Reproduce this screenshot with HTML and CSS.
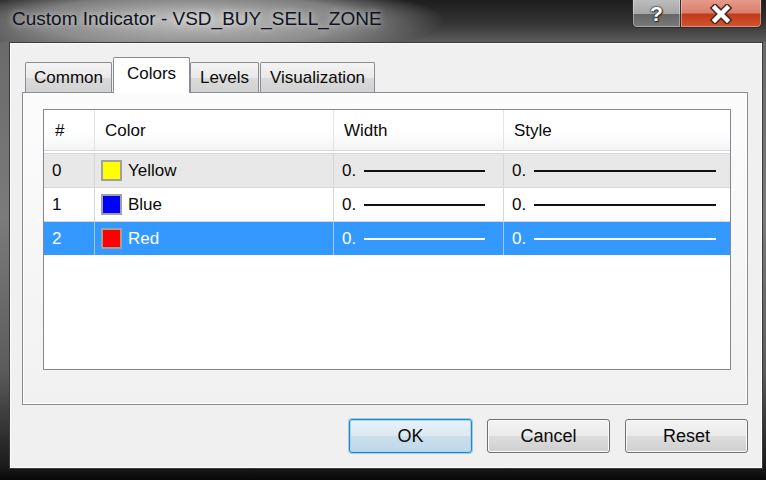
FILE: index.html
```html
<!DOCTYPE html>
<html lang="en">
<head>
    <meta charset="UTF-8">
    <title>Custom Indicator - VSD_BUY_SELL_ZONE</title>
    <link rel="stylesheet" href="styles.css">
</head>
<body>
    <div class="window">
        <div class="titlebar">
            <span class="title">Custom Indicator - VSD_BUY_SELL_ZONE</span>
            <div class="caption">
                <div class="cap-btn help">?</div>
                <div class="cap-btn close">
                    <svg width="30" height="20" viewBox="0 0 30 20">
                        <path d="M9 4 L21 16 M21 4 L9 16" stroke="#4a2a22" stroke-width="7.5" stroke-linecap="square"/>
                        <path d="M9 4 L21 16 M21 4 L9 16" stroke="#fff" stroke-width="4.5" stroke-linecap="square"/>
                    </svg>
                </div>
            </div>
        </div>
        <div class="frame">
            <div class="client">
                <div class="tabs">
                    <div class="tab tab-common">Common</div>
                    <div class="tab tab-colors active">Colors</div>
                    <div class="tab tab-levels">Levels</div>
                    <div class="tab tab-vis">Visualization</div>
                </div>
                <div class="tab-panel">
                    <div class="listview">
                        <div class="lv-head">
                            <div class="lv-th">#</div>
                            <div class="lv-th">Color</div>
                            <div class="lv-th">Width</div>
                            <div class="lv-th">Style</div>
                        </div>
                        <div class="lv-row hover">
                            <div class="lv-td">0</div>
                            <div class="lv-td"><span class="swatch yellow"></span>Yellow</div>
                            <div class="lv-td line-cell w">0.<span class="line"></span></div>
                            <div class="lv-td line-cell s">0.<span class="line"></span></div>
                        </div>
                        <div class="lv-row">
                            <div class="lv-td">1</div>
                            <div class="lv-td"><span class="swatch blue"></span>Blue</div>
                            <div class="lv-td line-cell w">0.<span class="line"></span></div>
                            <div class="lv-td line-cell s">0.<span class="line"></span></div>
                        </div>
                        <div class="lv-row selected">
                            <div class="lv-td">2</div>
                            <div class="lv-td"><span class="swatch red"></span>Red</div>
                            <div class="lv-td line-cell w">0.<span class="line"></span></div>
                            <div class="lv-td line-cell s">0.<span class="line"></span></div>
                        </div>
                    </div>
                </div>
                <div class="actions">
                    <button class="btn default">OK</button>
                    <button class="btn">Cancel</button>
                    <button class="btn">Reset</button>
                </div>
            </div>
        </div>
    </div>
</body>
</html>
```

FILE: styles.css
```css
* {
    box-sizing: border-box;
}
html, body {
    margin: 0;
    padding: 0;
}
body {
    width: 766px;
    height: 480px;
    overflow: hidden;
    font-family: "Liberation Sans", Arial, sans-serif;
    font-size: 17px;
    color: #0a0a0a;
    background-color: #0c0c0c;
}
.window {
    height: 480px;
    display: flex;
    flex-direction: column;
}
.titlebar {
    height: 42px;
    flex-shrink: 0;
    display: flex;
    align-items: flex-start;
    padding-left: 12px;
    background:
        radial-gradient(ellipse 250px 38px at 195px 20px, rgba(205,205,205,0.95), rgba(165,165,165,0.7) 65%, rgba(90,90,90,0) 100%),
        linear-gradient(to bottom, #1e1e1e, #343434 55%, #5c5c5c);
}
.title {
    margin-top: 8px;
    font-size: 19px;
    color: #10131f;
    text-shadow: 0 0 6px rgba(255,255,255,0.7);
    white-space: nowrap;
}
.caption {
    margin-left: auto;
    margin-right: 4px;
    margin-top: -4px;
    display: flex;
}
.cap-btn {
    height: 32px;
    border: 1px solid #2c2c2c;
    box-shadow: inset 0 0 0 1px rgba(255,255,255,0.35);
    display: flex;
    align-items: center;
    justify-content: center;
    padding-top: 4px;
}
.help {
    width: 48px;
    border-radius: 0 0 0 5px;
    border-right: none;
    background: linear-gradient(to bottom, #c2c2c2 0, #a6a6a6 55%, #666 58%, #7a7a7a 100%);
    color: #fff;
    font-weight: bold;
    font-size: 21px;
    text-shadow: 0 0 2px #222, 0 0 2px #222, 1px 1px 1px #333;
}
.close {
    width: 82px;
    border-radius: 0 0 5px 0;
    background: linear-gradient(to bottom, #eaa090 0, #d8806c 52%, #c23a1c 58%, #d2552f 100%);
}
.frame {
    flex: 1;
    padding: 0 3px 11px 9px;
    background: linear-gradient(to bottom, #6a6a6a 0, #7b7b7b 40%, #5c5c5c 75%, #1a1a1a 97%, #080808 100%);
}
.client {
    height: 427px;
    border: 1px solid #3a3a3a;
    background-color: #f0f0f0;
    box-shadow: inset 0 0 0 1px #fcfcfc;
    padding: 14px 14px 0 12px;
}
.tabs {
    height: 35px;
    display: flex;
    align-items: flex-end;
    padding-left: 3px;
}
.tab {
    height: 30px;
    border: 1px solid #898c95;
    border-bottom: none;
    border-radius: 2px 2px 0 0;
    background: linear-gradient(to bottom, #f4f4f4 0, #e9e9e9 50%, #dadada 51%, #d2d2d2 100%);
    display: flex;
    align-items: center;
    justify-content: center;
    padding-top: 1px;
}
.tab-common {
    width: 87px;
}
.tab-colors {
    width: 77px;
    margin-left: 1px;
}
.tab-levels {
    width: 69px;
}
.tab-vis {
    width: 115px;
    margin-left: 1px;
}
.tab.active {
    height: 36px;
    margin-bottom: -1px;
    background: #fff;
    position: relative;
    z-index: 1;
    padding-top: 0;
    padding-bottom: 3px;
}
.tab-panel {
    height: 313px;
    border: 1px solid #898c95;
    background: linear-gradient(to bottom, #fcfcfc, #f1f1f1);
    box-shadow: inset 0 0 0 1px #fff;
    padding: 16px 0 0 20px;
}
.listview {
    width: 688px;
    height: 261px;
    border: 1px solid #828790;
    background-color: #fff;
}
.lv-head, .lv-row {
    display: grid;
    grid-template-columns: 51px 239px 170px 225px;
}
.lv-head {
    height: 41px;
    border-bottom: 1px solid #d5d5d5;
    margin-bottom: 2px;
    background: linear-gradient(to bottom, #fff 0, #fff 55%, #f3f4f6 100%);
}
.lv-th {
    display: flex;
    align-items: center;
    padding: 2px 0 0 10px;
    border-right: 1px solid #e3e4e6;
}
.lv-th:first-child {
    padding-left: 11px;
}
.lv-th:last-child {
    border-right: none;
}
.lv-row {
    height: 34px;
    border-top: 1px solid #d7d7d7;
}
.lv-row.hover {
    background-color: #e8e8e8;
}
.lv-row.selected {
    background-color: #3399ff;
    color: #fff;
}
.lv-td {
    display: flex;
    align-items: center;
    padding-left: 8px;
    border-right: 1px solid #d7d7d7;
}
.lv-td:nth-child(2) {
    padding-left: 6px;
}
.lv-td:last-child {
    border-right: none;
}
.selected .lv-td {
    border-right-color: #a5c6e8;
}
.selected .lv-td:last-child {
    border-right: none;
}
.swatch {
    width: 21px;
    height: 21px;
    border: 2px solid #a0a0a0;
    margin-right: 6px;
}
.swatch.yellow {
    background-color: #ffff00;
}
.swatch.blue {
    background-color: #0000ff;
}
.swatch.red {
    background-color: #ff0000;
}
.line {
    flex: 1;
    height: 2px;
    margin-left: 8px;
    background-color: #111;
}
.selected .line {
    background-color: #fff;
}
.line-cell.w {
    padding-right: 18px;
}
.line-cell.s {
    padding-right: 13px;
}
.actions {
    display: flex;
    justify-content: flex-end;
    gap: 15px;
    margin-top: 14px;
}
.btn {
    width: 123px;
    height: 34px;
    border: 1px solid #707070;
    border-radius: 3px;
    font-family: "Liberation Sans", Arial, sans-serif;
    font-size: 18px;
    color: #0a0a0a;
    background: linear-gradient(to bottom, #f3f3f3 0, #ebebeb 50%, #dddddd 51%, #cfcfcf 100%);
    box-shadow: inset 0 0 0 1px #fbfbfb;
    padding: 0;
}
.btn.default {
    border-color: #3c7fb1;
    background: linear-gradient(to bottom, #e8f2f9 0, #dbe9f3 50%, #cbdfec 51%, #bfd7e8 100%);
    box-shadow: 0 0 0 1px #8fd0f4, inset 0 0 0 1px #9ad9f8;
}
```
